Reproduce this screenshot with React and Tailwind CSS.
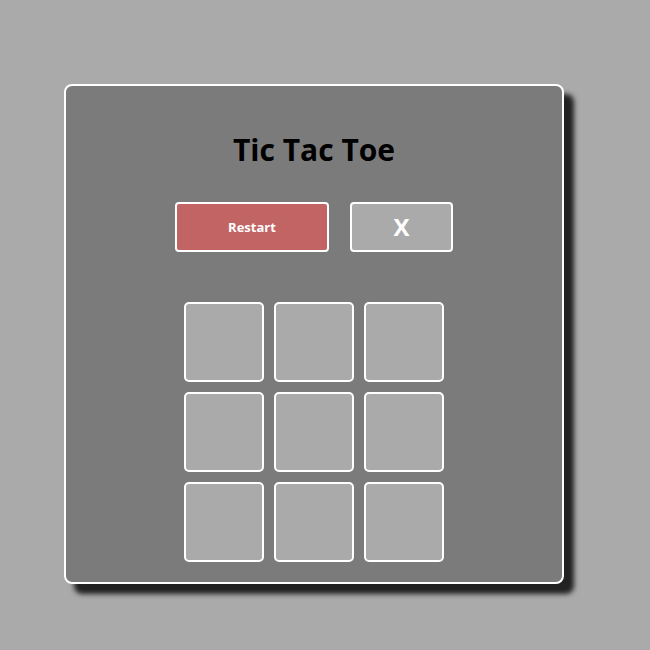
import { useState } from "react";

const Cell = ({ value, onClick }) => (
  <button
    onClick={onClick}
    className="w-[80px] h-[80px] bg-[#aaaaaa] border-2 border-white rounded-[5px] text-white text-[36px] font-bold flex items-center justify-center"
  >
    {value}
  </button>
);

export default function App() {
  const [board, setBoard] = useState(Array(9).fill(""));
  const [turn, setTurn] = useState("X");

  const play = (i) => {
    if (board[i]) return;
    const next = [...board];
    next[i] = turn;
    setBoard(next);
    setTurn(turn === "X" ? "O" : "X");
  };

  const restart = () => {
    setBoard(Array(9).fill(""));
    setTurn("X");
  };

  return (
    <div
      className="w-[650px] h-[650px] bg-[#aaaaaa] pl-[64px] pt-[84px]"
      style={{ fontFamily: '"Open Sans", "Noto Sans", sans-serif' }}
    >
      <div className="w-[500px] h-[500px] bg-[#7b7b7b] border-2 border-white rounded-[8px] shadow-[10px_10px_5px_#222222] flex flex-col items-center">
        <h1 className="mt-[44px] text-[30px] leading-[40px] font-bold text-black">
          Tic Tac Toe
        </h1>
        <div className="mt-[32px] flex gap-[21px]">
          <button
            onClick={restart}
            className="w-[154px] h-[50px] bg-[#c36464] border-2 border-white rounded-[4px] text-white text-[13px] font-bold pt-[1px]"
          >
            Restart
          </button>
          <div className="w-[103px] h-[50px] bg-[#aaaaaa] border-2 border-white rounded-[4px] text-white text-[24px] font-bold flex items-center justify-center">
            {turn}
          </div>
        </div>
        <div className="mt-[50px] grid grid-cols-3 gap-[10px]">
          {board.map((v, i) => (
            <Cell key={i} value={v} onClick={() => play(i)} />
          ))}
        </div>
      </div>
    </div>
  );
}
